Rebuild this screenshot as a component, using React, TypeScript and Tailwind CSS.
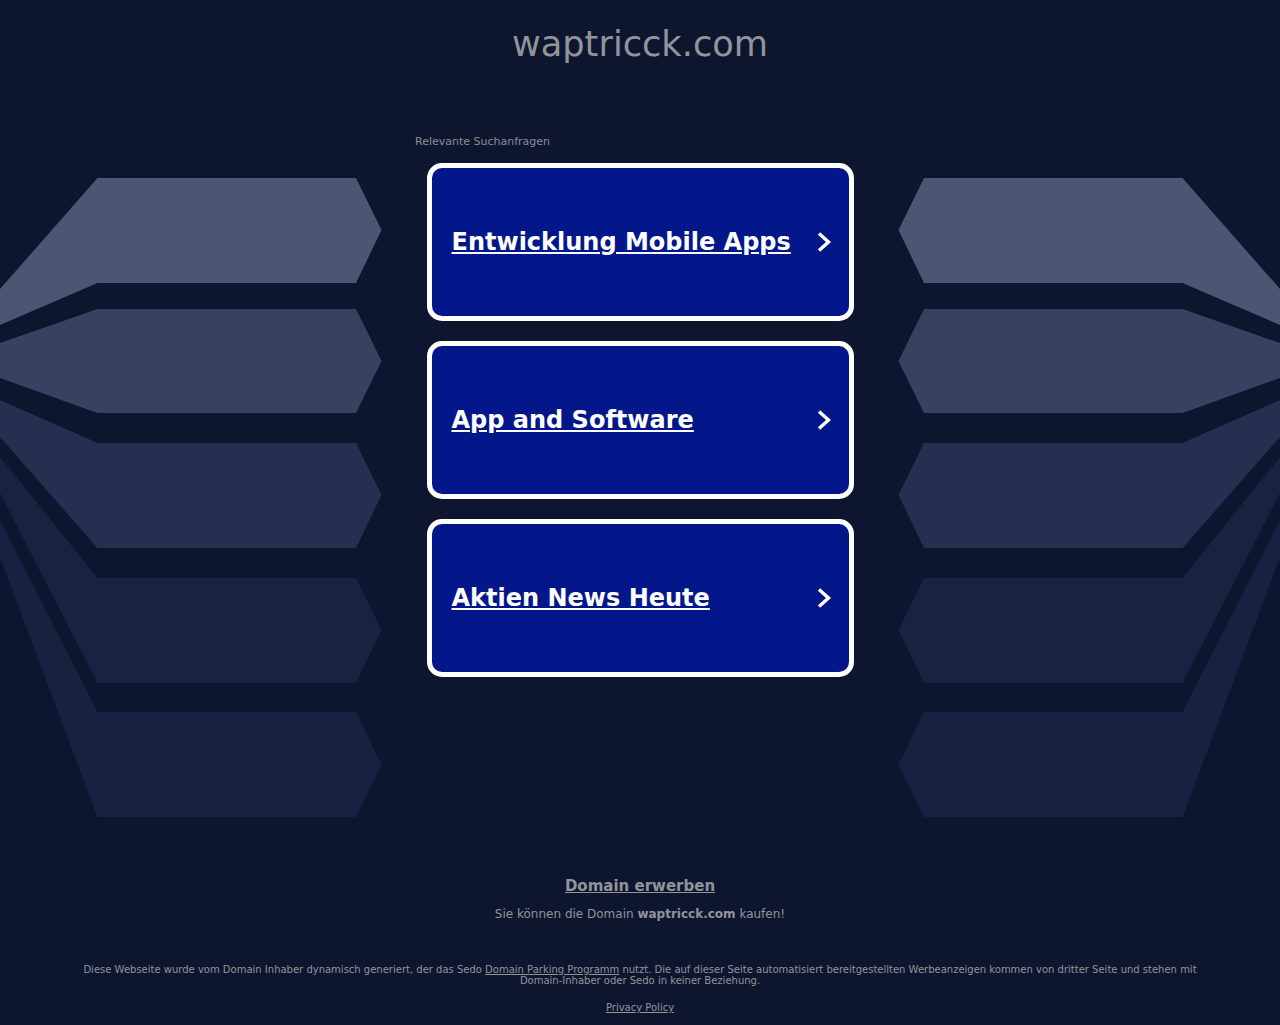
const font = { fontFamily: '"DejaVu Sans", sans-serif' };

const shapes: [string, string][] = [
  ["#4b5673", "97.5,178 356,178 381.5,230 356,283 97.5,283 0,325 0,289"],
  ["#374261", "97.5,309 356,309 381.5,361 356,413 97.5,413 0,378 0,343"],
  ["#252f50", "97.5,443 356,443 381.5,495 356,548 97.5,548 0,437 0,400"],
  ["#182342", "97.5,578 356,578 381.5,630 356,683 97.5,683 0,493 0,457"],
  ["#172241", "97.5,712 356,712 381.5,765 356,817 97.5,817 0,557 0,520"],
];

function Backdrop() {
  return (
    <svg className="absolute left-0 top-0" width="1280" height="1025" viewBox="0 0 1280 1025">
      {shapes.map(([fill, pts]) => (
        <g key={pts} fill={fill}>
          <polygon points={pts} />
          <polygon points={pts} transform="translate(1280 0) scale(-1 1)" />
        </g>
      ))}
    </svg>
  );
}

function Card({ label }: { label: string }) {
  return (
    <a className="flex h-[158px] w-[427px] items-center justify-between rounded-[15px] border-[5px] border-white bg-[#03178a] pl-5 pr-[14px] text-white">
      <span className="text-[24px] font-bold underline">{label}</span>
      <svg width="20" height="24" viewBox="0 0 20 24" fill="none" stroke="white" strokeWidth="3.4">
        <path d="M4 3.5 L13.5 12 L4 20.5" />
      </svg>
    </a>
  );
}

export default function App() {
  return (
    <div className="relative h-[1025px] w-[1280px] overflow-hidden bg-[#0e162f]" style={font}>
      <Backdrop />
      <div className="relative flex flex-col items-center">
        <h1 className="mt-[22px] h-[44px] text-[35.2px] leading-[44px] font-normal text-[#92949b]">waptricck.com</h1>
        <div className="mt-[69px] w-[450px] pl-0 text-[11px] leading-[14px] text-[#8a8d96]">Relevante Suchanfragen</div>
        <div className="mt-[14px] flex flex-col gap-5">
          <Card label="Entwicklung Mobile Apps" />
          <Card label="App and Software" />
          <Card label="Aktien News Heute" />
        </div>
        <a className="mt-[199px] text-[15px] leading-5 font-bold text-[#92949b] underline">Domain erwerben</a>
        <p className="mt-2 text-xs leading-5 text-[#92949b]">
          Sie können die Domain <b>waptricck.com</b> kaufen!
        </p>
        <p className="mt-10 w-[1120px] text-center text-[10px] leading-[11px] text-[#92949b]">
          Diese Webseite wurde vom Domain Inhaber dynamisch generiert, der das Sedo <a className="underline">Domain Parking Programm</a> nutzt. Die auf dieser Seite automatisiert bereitgestellten Werbeanzeigen kommen von dritter Seite und stehen mit Domain-Inhaber oder Sedo in keiner Beziehung.
        </p>
        <a className="mt-4 text-[10px] leading-[11px] text-[#92949b] underline">Privacy Policy</a>
      </div>
    </div>
  );
}
